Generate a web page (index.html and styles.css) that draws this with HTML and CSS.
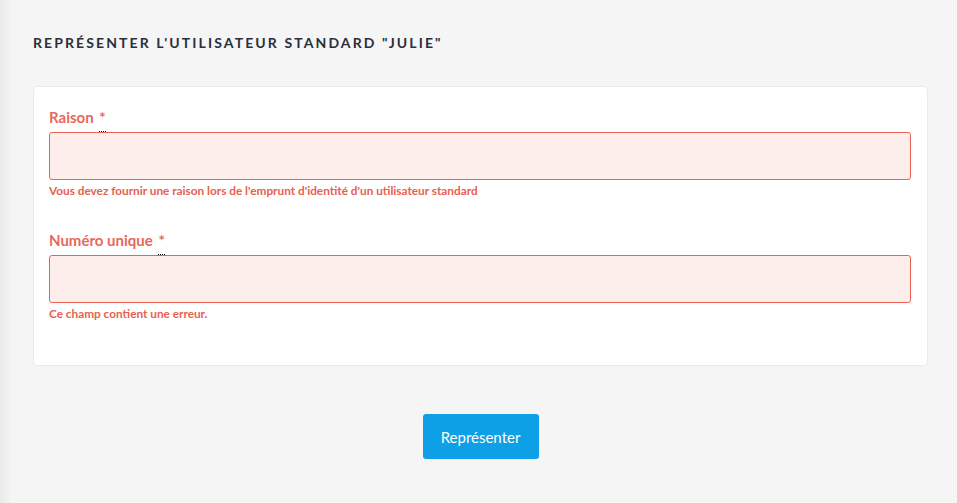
FILE: index.html
```html
<!DOCTYPE html>
<html lang="fr">
<head>
<meta charset="utf-8">
<link rel="stylesheet" href="styles.css">
</head>
<body>
<main class="page">
  <h1 class="title">Représenter l'utilisateur standard "julie"</h1>
  <form class="card">
    <div class="field">
      <label class="label">Raison <abbr class="req" title="obligatoire">*</abbr></label>
      <input class="input" type="text">
      <p class="error">Vous devez fournir une raison lors de l'emprunt d'identité d'un utilisateur standard</p>
    </div>
    <div class="field">
      <label class="label">Numéro unique <abbr class="req" title="obligatoire">*</abbr></label>
      <input class="input" type="text">
      <p class="error">Ce champ contient une erreur.</p>
    </div>
  </form>
  <div class="actions">
    <button class="btn" type="button">Représenter</button>
  </div>
</main>
</body>
</html>
```
FILE: styles.css
```css
html, body {
  margin: 0;
  height: 100%;
}
body {
  background: linear-gradient(to right, #e9e9e9 0px, #f5f5f5 12px, #f5f5f5 100%);
  font-family: "Lato", "Open Sans", sans-serif;
}
.page {
  padding: 34px 29px 0 33px;
}
.title {
  margin: 0;
  font-size: 14px;
  font-weight: 700;
  letter-spacing: 2.1px;
  text-transform: uppercase;
  color: #2a2f3b;
  line-height: 18px;
}
.card {
  margin-top: 34px;
  background: #fff;
  border: 1px solid #ebebeb;
  border-radius: 4px;
  padding: 20px 16px 44px 15px;
  display: flex;
  flex-direction: column;
  gap: 32px;
}
.field {
  display: flex;
  flex-direction: column;
}
.label {
  font-size: 15px;
  font-weight: 700;
  color: #e8685a;
  line-height: 20px;
  margin-bottom: 5px;
}
.req {
  text-decoration: none;
  position: relative;
  margin-left: 2px;
}
.req::after {
  content: "";
  position: absolute;
  left: 0;
  right: 0;
  bottom: -6px;
  border-bottom: 1px dotted #000;
}
.input {
  height: 48px;
  box-sizing: border-box;
  border: 1px solid #ea6253;
  background: #fdeeec;
  border-radius: 3px;
  margin: 0;
  outline: none;
}
.error {
  margin: 4px 0 0;
  font-size: 11.8px;
  font-weight: 700;
  color: #e8604f;
  line-height: 14px;
}
.actions {
  display: flex;
  justify-content: center;
  margin-top: 48px;
}
.btn {
  width: 116px;
  height: 45px;
  background: #0ea0e6;
  color: #fff;
  border: none;
  border-radius: 3px;
  font-family: "Lato", "Open Sans", sans-serif;
  font-size: 15px;
}
```
